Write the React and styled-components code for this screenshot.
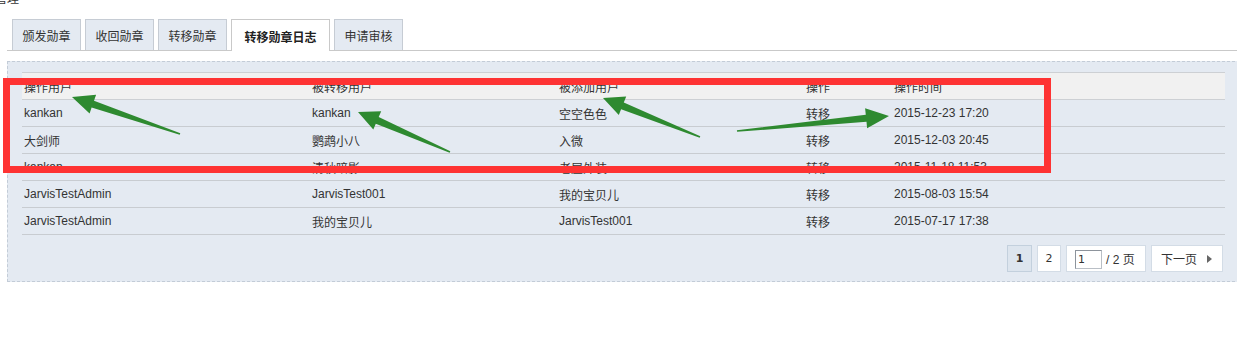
import React from "react";
import styled, { createGlobalStyle } from "styled-components";

const GlobalStyle = createGlobalStyle`
  body {
    margin: 0;
    background: #fff;
    color: #333;
    font-family: "Liberation Sans", "Noto Sans CJK SC", sans-serif;
    font-size: 12px;
    overflow: hidden;
  }
`;

const TABS = [
  { label: "颁发勋章", width: 69 },
  { label: "收回勋章", width: 69 },
  { label: "转移勋章", width: 69 },
  { label: "转移勋章日志", width: 99, active: true },
  { label: "申请审核", width: 69 },
];

const COLUMNS = [
  { title: "操作用户", width: 288 },
  { title: "被转移用户", width: 247 },
  { title: "被添加用户", width: 247 },
  { title: "操作", width: 88 },
  { title: "操作时间" },
];

const ROWS = [
  ["kankan", "kankan", "空空色色", "转移", "2015-12-23 17:20"],
  ["大剑师", "鹦鹉小八", "入微", "转移", "2015-12-03 20:45"],
  ["kankan", "清秋暗影", "老屋外装", "转移", "2015-11-18 11:53"],
  ["JarvisTestAdmin", "JarvisTest001", "我的宝贝儿", "转移", "2015-08-03 15:54"],
  ["JarvisTestAdmin", "我的宝贝儿", "JarvisTest001", "转移", "2015-07-17 17:38"],
];

// annotation arrows drawn on top of the screenshot
const ARROWS = [
  { tail: [180, 134], tip: [72, 97] },
  { tail: [450, 152], tip: [358, 112], head: 21 },
  { tail: [700, 137], tip: [603, 98], head: 21 },
  { tail: [737, 131], tip: [889, 116], head: 23 },
];

const arrowPoints = ({ tail, tip, head = 22, wing = 10, shaft = 3.6, end = 0.8 }) => {
  const dx = tip[0] - tail[0];
  const dy = tip[1] - tail[1];
  const len = Math.hypot(dx, dy);
  const ux = dx / len;
  const uy = dy / len;
  const nx = -uy;
  const ny = ux;
  const bx = tip[0] - ux * head;
  const by = tip[1] - uy * head;
  const pts = [
    tip,
    [bx + nx * wing, by + ny * wing],
    [bx + nx * shaft, by + ny * shaft],
    [tail[0] + nx * end, tail[1] + ny * end],
    [tail[0] - nx * end, tail[1] - ny * end],
    [bx - nx * shaft, by - ny * shaft],
    [bx - nx * wing, by - ny * wing],
  ];
  return pts.map((p) => `${p[0].toFixed(1)},${p[1].toFixed(1)}`).join(" ");
};

const App = () => {
  return (
    <Page>
      <GlobalStyle />
      <Title>管理</Title>
      <TabBar>
        {TABS.map((tab) => (
          <Tab key={tab.label} $width={tab.width} $active={tab.active}>
            {tab.label}
          </Tab>
        ))}
      </TabBar>
      <Panel>
        <Table>
          <thead>
            <HeadRow>
              {COLUMNS.map((col) => (
                <HeadCell key={col.title} $width={col.width}>
                  {col.title}
                </HeadCell>
              ))}
            </HeadRow>
          </thead>
          <tbody>
            {ROWS.map((row, i) => (
              <Row key={i}>
                {row.map((cell, j) => (
                  <Cell key={j}>{cell}</Cell>
                ))}
              </Row>
            ))}
          </tbody>
        </Table>
        <Pager>
          <PageButton $width={25} $active>
            1
          </PageButton>
          <PageButton $width={24}>2</PageButton>
          <PageJump>
            <PageInput defaultValue="1" />
            <PageTotal>/ 2 页</PageTotal>
          </PageJump>
          <NextButton>
            下一页
            <Caret />
          </NextButton>
        </Pager>
      </Panel>
      <Overlay width="1237" height="351" viewBox="0 0 1237 351">
        <rect x="6.5" y="81.5" width="1041" height="88" fill="none" stroke="#fe3333" strokeWidth="7" />
        {ARROWS.map((a, i) => (
          <polygon key={i} points={arrowPoints(a)} fill="#2e8a30" />
        ))}
      </Overlay>
    </Page>
  );
};

const Page = styled.div`
  position: relative;
  width: 1237px;
  height: 351px;
  overflow: hidden;
`;

const Title = styled.div`
  margin: -7px 0 0 -5px;
  height: 12px;
  line-height: 12px;
  white-space: nowrap;
`;

const TabBar = styled.div`
  display: flex;
  gap: 4px;
  height: 31px;
  margin: 14px 0 0 7px;
  padding-left: 5px;
  border-bottom: 1px solid #c9c9c9;
`;

const Tab = styled.div`
  display: flex;
  align-items: center;
  justify-content: center;
  box-sizing: border-box;
  width: ${(p) => p.$width}px;
  height: ${(p) => (p.$active ? 32 : 31)}px;
  border: 1px solid ${(p) => (p.$active ? "#c9c9c9" : "#c6ccd4")};
  border-bottom: none;
  background: ${(p) => (p.$active ? "#fff" : "#e4eaf2")};
  font-weight: ${(p) => (p.$active ? "bold" : "normal")};
  color: ${(p) => (p.$active ? "#222" : "#333")};
  padding-top: 1px;
  cursor: pointer;
`;

const Panel = styled.div`
  box-sizing: border-box;
  width: 1233px;
  margin: 10px 0 0 7px;
  padding: 10px 15px 9px 14px;
  border: 1px dashed #c3ccd7;
  background: #e4eaf2;
`;

const Table = styled.table`
  width: 1203px;
  border-collapse: collapse;
  table-layout: fixed;
`;

const HeadRow = styled.tr`
  background: #f1f1f1;
  border-top: 1px solid #cdd0d4;
  border-bottom: 1px solid #cdd0d4;
`;

const HeadCell = styled.th`
  box-sizing: border-box;
  width: ${(p) => (p.$width ? `${p.$width}px` : "auto")};
  height: 27px;
  padding: 0 0 0 2px;
  text-align: left;
  font-weight: normal;
  color: #333;
`;

const Row = styled.tr`
  border-bottom: 1px solid #c8ccd1;
`;

const Cell = styled.td`
  height: 26px;
  padding: 0 0 0 2px;
  white-space: nowrap;
  color: #333;
`;

const Pager = styled.div`
  display: flex;
  justify-content: flex-end;
  gap: 5px;
  margin: 10px 1px 0 0;
`;

const PageButton = styled.div`
  display: flex;
  align-items: center;
  justify-content: center;
  box-sizing: border-box;
  width: ${(p) => p.$width}px;
  height: 27px;
  border: 1px solid ${(p) => (p.$active ? "#c3d0dd" : "#d3dce6")};
  background: ${(p) => (p.$active ? "#dde5ee" : "#fff")};
  font-weight: ${(p) => (p.$active ? "bold" : "normal")};
  font-family: "DejaVu Sans", sans-serif;
  font-size: 11px;
  color: #333;
`;

const PageJump = styled.div`
  display: flex;
  align-items: center;
  box-sizing: border-box;
  width: 80px;
  height: 27px;
  padding-left: 8px;
  border: 1px solid #d3dce6;
  background: #fff;
`;

const PageInput = styled.input`
  box-sizing: border-box;
  width: 27px;
  height: 19px;
  margin: 1px 0 0;
  padding: 0 0 0 2px;
  border: 1px solid #b9bfc6;
  border-top-color: #8d949c;
  border-left-color: #8d949c;
  font-family: "DejaVu Sans", sans-serif;
  font-size: 11px;
  color: #333;
  outline: none;
`;

const PageTotal = styled.span`
  margin-left: 4px;
  color: #333;
`;

const NextButton = styled.div`
  display: flex;
  align-items: center;
  box-sizing: border-box;
  width: 72px;
  height: 27px;
  padding-left: 9px;
  border: 1px solid #d3dce6;
  background: #fff;
  color: #333;
`;

const Caret = styled.span`
  width: 0;
  height: 0;
  margin-left: 10px;
  border-top: 4.5px solid transparent;
  border-bottom: 4.5px solid transparent;
  border-left: 5px solid #666;
`;

const Overlay = styled.svg`
  position: absolute;
  top: 0;
  left: 0;
  pointer-events: none;
`;

export default App;
